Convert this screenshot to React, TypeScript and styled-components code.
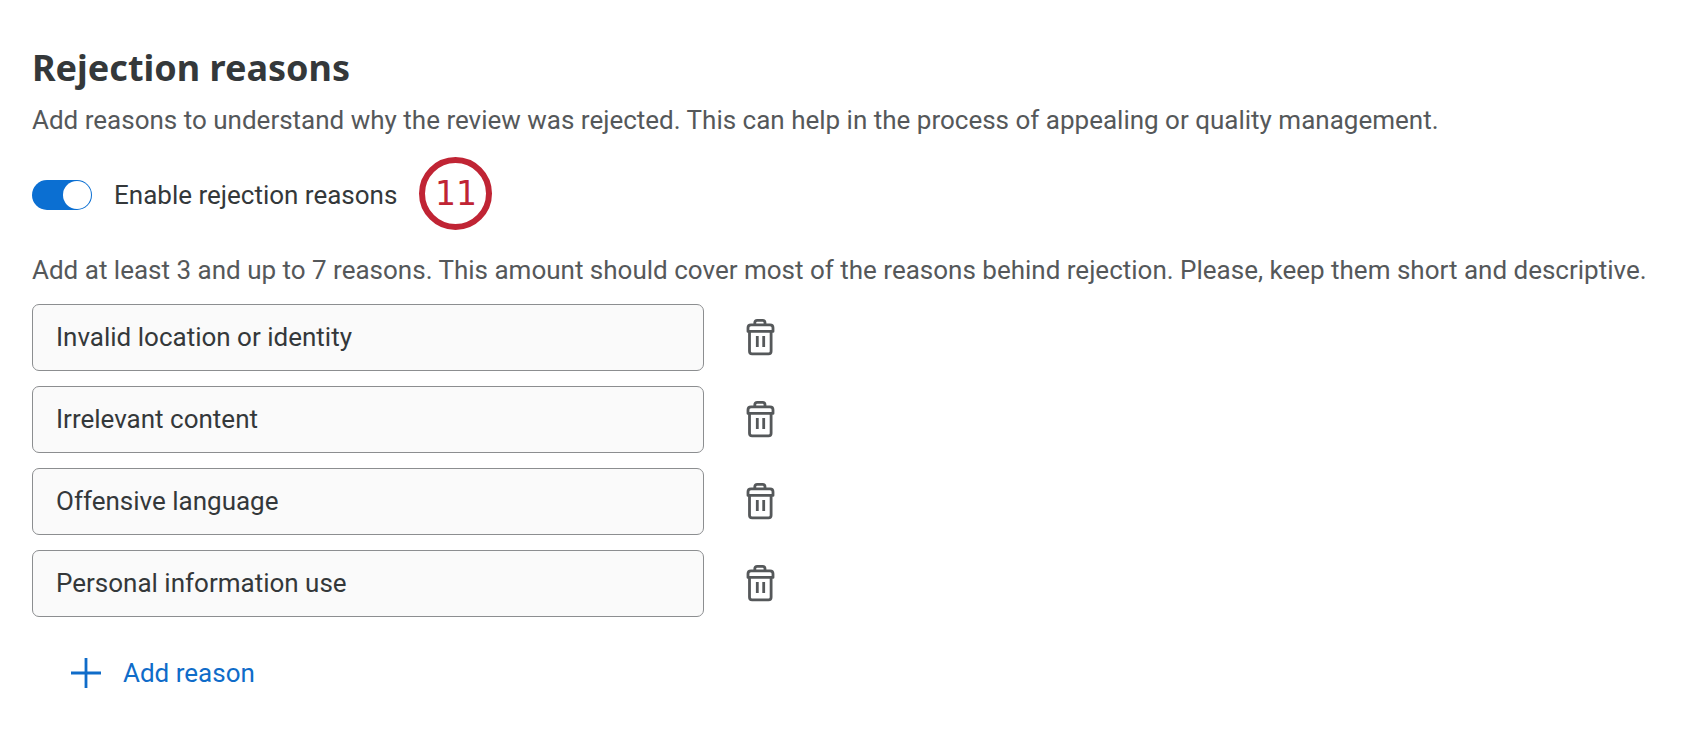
import React, { useState } from "react";
import styled, { createGlobalStyle } from "styled-components";

const GlobalStyle = createGlobalStyle`
  * { box-sizing: border-box; }
  body {
    margin: 0;
    background: #fff;
    color: #34383a;
    font-family: Roboto, sans-serif;
    font-size: 26px;
    line-height: 34px;
  }
`;

const Section = styled.main`
  padding: 44px 32px 40px;
`;

const Title = styled.h1`
  margin: 0;
  font-family: "Noto Sans", sans-serif;
  font-size: 36px;
  line-height: 48px;
  font-weight: 700;
`;

const Hint = styled.p`
  margin: 0;
  color: #55585a;
`;

const Intro = styled(Hint)`
  margin-top: 11px;
`;

const ToggleRow = styled.div`
  display: flex;
  align-items: center;
  margin: 20px 0 23px;
`;

const ToggleLabel = styled.label`
  display: flex;
  align-items: center;
  gap: 22px;
  padding-top: 3px;
  cursor: pointer;
`;

const Switch = styled.input`
  appearance: none;
  display: flex;
  width: 60px;
  height: 30px;
  margin: 0;
  padding: 1px;
  border-radius: 15px;
  background: #8a8d90;
  cursor: pointer;

  &::before {
    content: "";
    width: 28px;
    height: 28px;
    border-radius: 50%;
    background: #fff;
  }

  &:checked {
    justify-content: flex-end;
    background: #0b6fd2;
  }
`;

const StepBadge = styled.span`
  display: flex;
  align-items: center;
  justify-content: center;
  width: 73px;
  height: 73px;
  margin-left: 22px;
  border: 6px solid #c02434;
  border-radius: 50%;
  color: #c02434;
  font-family: "DejaVu Sans", sans-serif;
  font-size: 33px;
`;

const ReasonList = styled.ul`
  display: flex;
  flex-direction: column;
  gap: 15px;
  margin: 17px 0 0;
  padding: 0;
  list-style: none;
`;

const ReasonRow = styled.li`
  display: flex;
  align-items: center;
  gap: 36px;
`;

const ReasonInput = styled.input`
  flex: 0 1 672px;
  min-width: 0;
  height: 67px;
  padding: 0 23px 2px;
  border: 1px solid #8c8e90;
  border-radius: 7px;
  background: #fafafa;
  color: inherit;
  font: inherit;
`;

const IconButton = styled.button`
  display: flex;
  padding: 5px 6px 7px;
  border: 0;
  background: none;
  color: #55585a;
  cursor: pointer;
`;

const AddButton = styled.button`
  display: flex;
  align-items: center;
  gap: 21px;
  margin: 39px 0 0 38px;
  padding: 0;
  border: 0;
  background: none;
  color: #0f6cc9;
  font: inherit;
  cursor: pointer;
`;

const TrashIcon = () => (
  <svg width="30" height="38" viewBox="0 0 30 38" fill="none" stroke="currentColor" strokeWidth="2.8" aria-hidden="true">
    <path d="M8.8 6.4V4.8Q8.8 2.4 11.2 2.4H16.6Q19 2.4 19 4.8V6.4" />
    <path d="M2 13.4V9.8Q2 6.8 5 6.8H24Q27 6.8 27 9.8V13.4Z" strokeLinejoin="round" />
    <path d="M3.5 13.4V33.2Q3.5 35.8 6.1 35.8H22.5Q25.1 35.8 25.1 33.2V13.4" />
    <path d="M11.3 18V29M17.7 18V29" />
  </svg>
);

const PlusIcon = () => (
  <svg width="32" height="32" viewBox="0 0 32 32" stroke="currentColor" strokeWidth="2.8" aria-hidden="true">
    <path d="M1 16H31M16 1V31" />
  </svg>
);

const initialReasons = [
  "Invalid location or identity",
  "Irrelevant content",
  "Offensive language",
  "Personal information use",
];

export default function App() {
  const [enabled, setEnabled] = useState(true);
  const [reasons, setReasons] = useState(initialReasons);

  return (
    <>
      <GlobalStyle />
      <Section>
        <Title>Rejection reasons</Title>
        <Intro>
          Add reasons to understand why the review was rejected. This can help in the process of appealing or quality management.
        </Intro>
        <ToggleRow>
          <ToggleLabel>
            <Switch type="checkbox" role="switch" checked={enabled} onChange={(e) => setEnabled(e.target.checked)} />
            Enable rejection reasons
          </ToggleLabel>
          <StepBadge>11</StepBadge>
        </ToggleRow>
        <Hint>
          Add at least 3 and up to 7 reasons. This amount should cover most of the reasons behind rejection. Please, keep them short and descriptive.
        </Hint>
        <ReasonList>
          {reasons.map((reason, index) => (
            <ReasonRow key={index}>
              <ReasonInput
                type="text"
                aria-label={`Reason ${index + 1}`}
                value={reason}
                onChange={(e) => setReasons(reasons.map((r, i) => (i === index ? e.target.value : r)))}
              />
              <IconButton
                type="button"
                aria-label={`Delete reason ${index + 1}`}
                onClick={() => setReasons(reasons.filter((_, i) => i !== index))}
              >
                <TrashIcon />
              </IconButton>
            </ReasonRow>
          ))}
        </ReasonList>
        <AddButton type="button" onClick={() => setReasons([...reasons, ""])}>
          <PlusIcon />
          Add reason
        </AddButton>
      </Section>
    </>
  );
}
